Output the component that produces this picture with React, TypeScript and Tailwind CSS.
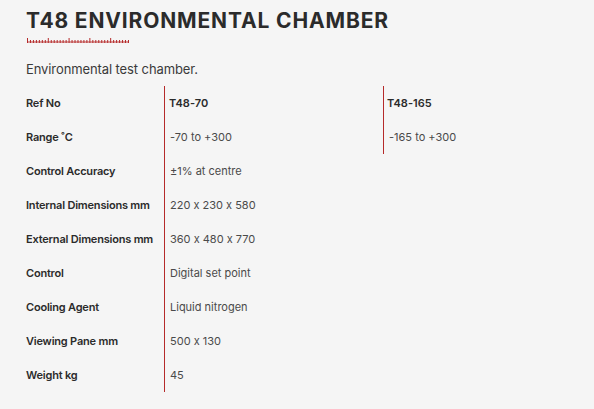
import React from "react";

const rows: [string, string][] = [
  ["Ref No", "T48-70"],
  ["Range ˚C", "-70 to +300"],
  ["Control Accuracy", "±1% at centre"],
  ["Internal Dimensions mm", "220 x 230 x 580"],
  ["External Dimensions mm", "360 x 480 x 770"],
  ["Control", "Digital set point"],
  ["Cooling Agent", "Liquid nitrogen"],
  ["Viewing Pane mm", "500 x 130"],
  ["Weight kg", "45"],
];

function Ruler() {
  const ticks = [];
  for (let i = 0; i <= 34; i++) {
    const x = 0.5 + i * 2.97;
    const tall = i % 7 === 0;
    ticks.push(
      <line key={i} x1={x} x2={x} y1={tall ? 0 : 2} y2={5} stroke="#b52a2a" strokeWidth={1} />
    );
  }
  return (
    <svg width="102" height="6" viewBox="0 0 102 6">
      <rect x="0" y="3" width="102" height="2" fill="#d99a9a" />
      {ticks}
    </svg>
  );
}

export default function App() {
  return (
    <div
      className="w-[594px] h-[409px] bg-[#f5f5f5] overflow-hidden [font-feature-settings:'calt'_0]"
      style={{ fontFamily: "Inter, 'Noto Sans', sans-serif" }}
    >
      <div className="pl-[26px] pt-[9px]">
        <h1 className="text-[21px] leading-[24px] font-bold text-[#2b2b2b] tracking-[0.85px]">T48 ENVIRONMENTAL CHAMBER</h1>
        <div className="mt-[5px] ml-[1px] h-[6px]">
          <Ruler />
        </div>
        <p className="mt-[17px] text-[13px] leading-[16px] text-[#3a3a3a] tracking-[-0.1px]">Environmental test chamber.</p>
        <div className="mt-[9px] flex text-[11px]">
          <div className="w-[138px] flex flex-col">
            {rows.map(([l]) => (
              <div key={l} className="h-[34px] flex items-center font-semibold text-[#2b2b2b] tracking-[-0.2px]">{l}</div>
            ))}
          </div>
          <div className="w-[219px] h-[306px] border-l border-[#b52a2a] flex flex-col">
            {rows.map(([l, v], i) => (
              <div key={l} className={"h-[34px] flex items-center " + (i === 0 ? "font-semibold text-[#2b2b2b] pl-[4px]" : "text-[#4a4a4a] pl-[5px]")}>{v}</div>
            ))}
          </div>
          <div className="h-[68px] border-l border-[#b52a2a] flex flex-col">
            <div className="h-[34px] flex items-center pl-[3px] font-semibold text-[#2b2b2b]">T48-165</div>
            <div className="h-[34px] flex items-center pl-[5px] text-[#4a4a4a]">-165 to +300</div>
          </div>
        </div>
      </div>
    </div>
  );
}
